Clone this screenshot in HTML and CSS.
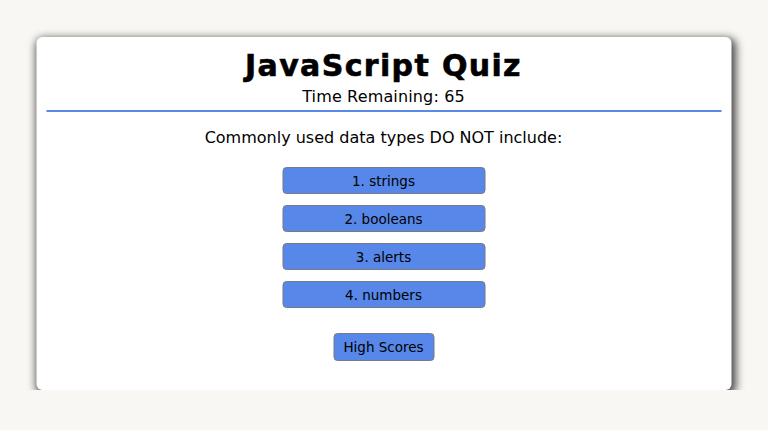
FILE: index.html
```html
<!DOCTYPE html>
<html>
<head>
<meta charset="utf-8">
<link rel="stylesheet" href="styles.css">
</head>
<body>
<main class="card">
  <header class="head">
    <h1 class="title">JavaScript Quiz</h1>
    <div class="timer">Time Remaining: 65</div>
  </header>
  <section class="quiz">
    <p class="question">Commonly used data types DO NOT include:</p>
    <div class="answers">
      <button class="btn answer">1. strings</button>
      <button class="btn answer">2. booleans</button>
      <button class="btn answer">3. alerts</button>
      <button class="btn answer">4. numbers</button>
    </div>
    <button class="btn scores">High Scores</button>
  </section>
</main>
</body>
</html>
```

FILE: styles.css
```css
html, body {
  margin: 0;
  padding: 0;
}
body {
  background: #f8f7f3;
  font-family: "DejaVu Sans", Verdana, sans-serif;
  color: #000;
  padding-top: 37px;
}
.card {
  width: 695px;
  height: 353px;
  box-sizing: border-box;
  margin: 0 auto;
  background: #fff;
  border-radius: 6px;
  box-shadow: 2px 3px 8px 2px rgba(0,0,0,0.7);
  padding: 10px;
  transform: translateX(-0.5px);
}
.head {
  text-align: center;
  border-bottom: 2px solid #5a8ae6;
}
.title {
  margin: 0;
  font-size: 30px;
  letter-spacing: 1.35px;
  -webkit-text-stroke: 0.6px #000;
  font-weight: bold;
  line-height: 37px;
}
.timer {
  font-size: 16px;
  letter-spacing: 0.15px;
  line-height: 26px;
}
.quiz {
  display: flex;
  flex-direction: column;
  align-items: center;
}
.question {
  font-size: 16px;
  margin: 16px 0 19px;
  line-height: 20px;
}
.answers {
  display: flex;
  flex-direction: column;
  gap: 11px;
}
.btn {
  font-family: "DejaVu Sans", Verdana, sans-serif;
  font-size: 13.5px;
  color: #000;
  background: #5787e8;
  border: 1px solid #777b84;
  border-radius: 4px;
  height: 27px;
  padding: 0 8px;
}
.answer {
  width: 203px;
}
.scores {
  margin-top: 25px;
  width: 101px;
  height: 28px;
  padding: 0;
  font-size: 13.5px;
}
```
